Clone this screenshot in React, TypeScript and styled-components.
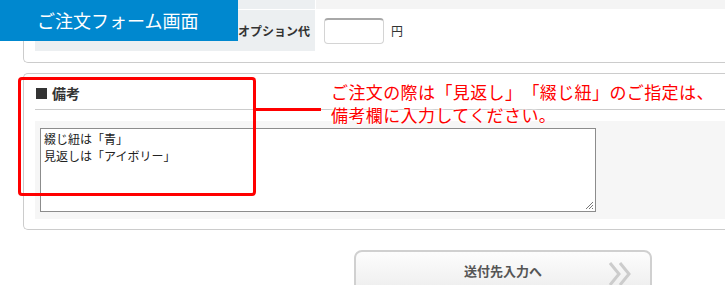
import React from 'react';
import styled, { createGlobalStyle } from 'styled-components';

const GlobalStyle = createGlobalStyle`
  html, body {
    margin: 0;
    padding: 0;
    background: #fff;
    overflow: hidden;
  }
  body {
    font-family: 'Noto Sans CJK JP', 'Noto Sans', sans-serif;
    color: #333;
    text-spacing-trim: space-all;
  }
`;

const Page = styled.div`
  position: relative;
  width: 725px;
  height: 285px;
  display: flex;
  flex-direction: column;
  align-items: flex-start;
`;

const Banner = styled.div`
  position: absolute;
  top: 0;
  left: 0;
  width: 238px;
  height: 41px;
  background: #0088cf;
  color: #fff;
  font-size: 18px;
  line-height: 41px;
  padding-left: 37px;
  box-sizing: border-box;
  z-index: 2;
`;

const TopPanel = styled.div`
  margin-left: 23px;
  width: 720px;
  border: 1px solid #ccc;
  border-top: none;
  border-right: none;
  border-radius: 0 0 0 5px;
  padding: 0 0 11px 11px;
  box-sizing: border-box;
`;

const OptionTable = styled.div`
  display: grid;
  grid-template-columns: 280px 1fr;
  column-gap: 1px;
`;

const LabelCell = styled.div<{ $h: number }>`
  height: ${({ $h }) => $h}px;
  background: #eceff1;
  display: flex;
  align-items: center;
  justify-content: flex-end;
  padding-right: 5px;
  font-size: 12px;
  font-weight: bold;
  color: #333;
`;

const ValueCell = styled.div<{ $h: number; $shade?: boolean }>`
  height: ${({ $h }) => $h}px;
  background: ${({ $shade }) => ($shade ? '#f4f4f4' : '#fff')};
  border-bottom: ${({ $shade }) => ($shade ? '1px solid #fff' : 'none')};
  display: flex;
  align-items: center;
  padding-left: 8px;
  gap: 7px;
  font-size: 12px;
`;

const PriceInput = styled.div`
  width: 60px;
  height: 26px;
  box-sizing: border-box;
  border: 1px solid #d4d4d4;
  border-top: 2px solid #a8a8a8;
  border-radius: 4px;
  background: #fff;
`;

const NotePanel = styled.div`
  margin-top: 10px;
  margin-left: 23px;
  width: 720px;
  height: 159px;
  border: 1px solid #ccc;
  border-right: none;
  border-radius: 5px 0 0 5px;
  padding: 0 0 10px 11px;
  box-sizing: border-box;
  display: flex;
  flex-direction: column;
`;

const NoteHeader = styled.div`
  height: 36px;
  border-bottom: 1px solid #ccc;
  display: flex;
  align-items: flex-end;
  padding: 0 0 6px 1px;
  box-sizing: border-box;
  gap: 5px;
  font-size: 14px;
  font-weight: bold;
  color: #333;
`;

const Square = styled.span`
  width: 11px;
  height: 11px;
  background: #333;
  margin-bottom: 4px;
`;

const NoteBody = styled.div`
  margin-top: 11px;
  background: #f6f6f6;
  height: 98px;
  padding: 7px 5px;
  box-sizing: border-box;
`;

const NoteArea = styled.div`
  position: relative;
  width: 556px;
  height: 84px;
  box-sizing: border-box;
  border: 1px solid #8c8c8c;
  background: #fff;
  padding: 1px 3px;
  font-size: 12px;
  line-height: 17px;
  color: #222;
`;

const Grip = styled.svg`
  position: absolute;
  right: 1px;
  bottom: 1px;
`;

const ButtonRow = styled.div`
  margin-top: 20px;
  margin-left: 354px;
`;

const NextButton = styled.div`
  position: relative;
  width: 298px;
  height: 46px;
  box-sizing: border-box;
  border: 2px solid #d0d0d0;
  border-radius: 8px;
  background: linear-gradient(#fdfdfd, #ececec);
  display: flex;
  align-items: center;
  justify-content: center;
  padding-bottom: 6px;
  font-size: 13px;
  font-weight: bold;
  color: #555;
`;

const Chevrons = styled.svg`
  position: absolute;
  right: 16px;
  top: 10px;
`;

const Highlight = styled.div`
  position: absolute;
  left: 18px;
  top: 77px;
  width: 238px;
  height: 119px;
  box-sizing: border-box;
  border: 3px solid #f00;
  border-radius: 4px;
  z-index: 3;
`;

const Leader = styled.div`
  position: absolute;
  left: 255px;
  top: 108px;
  width: 66px;
  height: 3px;
  background: #f00;
  z-index: 3;
`;

const Callout = styled.div`
  position: absolute;
  left: 331px;
  top: 80px;
  color: #f00;
  font-size: 17px;
  line-height: 23px;
  letter-spacing: 0.4px;
  white-space: nowrap;
  text-shadow: 0 0 2px #fff, 0 0 3px #fff, 0 0 4px #fff, 0 0 4px #fff;
  z-index: 3;
`;

export default function App() {
  return (
    <Page>
      <GlobalStyle />
      <Banner>ご注文フォーム画面</Banner>
      <TopPanel>
        <OptionTable>
          <LabelCell $h={9} />
          <ValueCell $h={9} $shade />
          <LabelCell $h={41}>オプション代</LabelCell>
          <ValueCell $h={41}>
            <PriceInput />
            円
          </ValueCell>
        </OptionTable>
      </TopPanel>

      <NotePanel>
        <NoteHeader>
          <Square />
          備考
        </NoteHeader>
        <NoteBody>
          <NoteArea>
            綴じ紐は「青」
            <br />
            見返しは「アイボリー」
            <Grip width="10" height="10" viewBox="0 0 10 10">
              <path d="M9 2 L2 9 M9 5 L5 9 M9 8 L8 9" stroke="#777" strokeWidth="1" />
            </Grip>
          </NoteArea>
        </NoteBody>
      </NotePanel>

      <ButtonRow>
        <NextButton>
          送付先入力へ
          <Chevrons width="26" height="24" viewBox="0 0 26 24">
            <path d="M2 1 L11 12 L2 23 M12 1 L21 12 L12 23" fill="none" stroke="#ccc" strokeWidth="3" />
          </Chevrons>
        </NextButton>
      </ButtonRow>

      <Highlight />
      <Leader />
      <Callout>
        ご注文の際は「見返し」「綴じ紐」のご指定は、
        <br />
        備考欄に入力してください。
      </Callout>
    </Page>
  );
}
